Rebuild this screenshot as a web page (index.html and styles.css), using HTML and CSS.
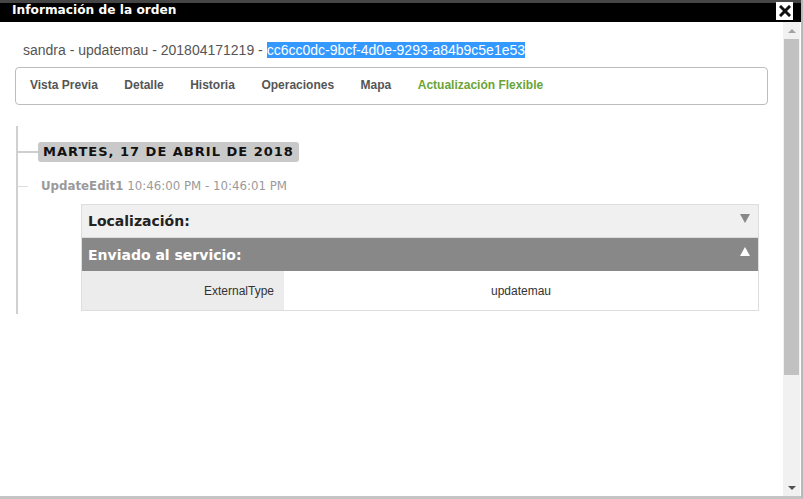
FILE: index.html
```html
<!DOCTYPE html>
<html lang="es">
<head>
<meta charset="utf-8">
<title>Información de la orden</title>
<link rel="stylesheet" href="styles.css">
</head>
<body>
<div class="dialog">
  <div class="titlebar">
    <span class="title">Información de la orden</span>
    <span class="close">
      <svg width="12" height="12" viewBox="0 0 12 12"><path d="M2 2 L10 10 M10 2 L2 10" stroke="#111" stroke-width="3" stroke-linecap="square"/></svg>
    </span>
  </div>
  <div class="main">
    <div class="content">
      <div class="ordername">sandra - updatemau - 201804171219 - <span class="sel">cc6cc0dc-9bcf-4d0e-9293-a84b9c5e1e53</span></div>
      <nav class="tabs">
        <span class="tab">Vista Previa</span>
        <span class="tab">Detalle</span>
        <span class="tab">Historia</span>
        <span class="tab">Operaciones</span>
        <span class="tab">Mapa</span>
        <span class="tab active">Actualización Flexible</span>
      </nav>
      <div class="timeline">
        <div class="daterow">
          <span class="hline"></span>
          <span class="date">MARTES, 17 DE ABRIL DE 2018</span>
        </div>
        <div class="eventrow">
          <span class="hline short"></span>
          <span class="event"><b>UpdateEdit1</b> 10:46:00 PM - 10:46:01 PM</span>
        </div>
        <div class="accordion">
          <div class="acc-head">
            <span>Localización:</span>
            <span class="arrow down"></span>
          </div>
          <div class="acc-head open">
            <span>Enviado al servicio:</span>
            <span class="arrow up"></span>
          </div>
          <div class="acc-row">
            <div class="key">ExternalType</div>
            <div class="val">updatemau</div>
          </div>
        </div>
      </div>
    </div>
    <div class="scrollbar">
      <span class="sb-btn"><span class="tri-up"></span></span>
      <span class="thumb"></span>
      <span class="track"></span>
      <span class="sb-btn"><span class="tri-down"></span></span>
    </div>
  </div>
</div>
</body>
</html>
```
FILE: styles.css
```css
html, body {
  margin: 0;
  padding: 0;
  background: #ffffff;
}
body {
  width: 803px;
  height: 499px;
  overflow: hidden;
}
.dialog {
  width: 803px;
  height: 499px;
  box-sizing: border-box;
  display: flex;
  flex-direction: column;
  border-right: 2px solid #b8b8b8;
  border-bottom: 3px solid #c4c4c4;
  background: #fff;
}
.titlebar {
  height: 22px;
  box-sizing: border-box;
  background: #000;
  border-top: 3px solid #454545;
  display: flex;
  justify-content: space-between;
  align-items: flex-start;
  padding-left: 12px;
  padding-right: 8px;
}
.title {
  color: #fff;
  font-family: "DejaVu Sans", Verdana, sans-serif;
  font-weight: bold;
  font-size: 12.2px;
  line-height: 14px;
  margin-top: 0;
}
.close {
  width: 17px;
  height: 18px;
  margin-top: -1px;
  background: #fff;
  display: flex;
  align-items: center;
  justify-content: center;
}
.main {
  flex: 1;
  display: flex;
  min-height: 0;
}
.content {
  flex: 1;
  padding: 19px 15px 0 15px;
  min-width: 0;
}
.ordername {
  font-family: "Liberation Sans", Arial, sans-serif;
  font-size: 14px;
  line-height: 16px;
  color: #555;
  padding-left: 8px;
  padding-top: 1px;
}
.sel {
  background: #3399ff;
  color: #fff;
}
.tabs {
  margin-top: 9px;
  height: 38px;
  box-sizing: border-box;
  border: 1px solid #bdbdbd;
  border-radius: 4px;
  display: flex;
  align-items: center;
  gap: 26.5px;
  padding-left: 14px;
  padding-bottom: 3px;
  font-family: "Liberation Sans", Arial, sans-serif;
  font-weight: bold;
  font-size: 12px;
  color: #555;
}
.tab.active {
  color: #6aa437;
}
.timeline {
  margin-top: 21px;
  margin-left: 1px;
  border-left: 2px solid #d0d0d0;
  padding-top: 16px;
  padding-bottom: 3px;
}
.daterow {
  display: flex;
  align-items: center;
}
.hline {
  width: 20px;
  height: 2px;
  background: #cfcfcf;
}
.hline.short {
  width: 10px;
  height: 1px;
  background: #dcdcdc;
}
.date {
  background: #c9c9c9;
  border-radius: 3px;
  padding: 0 5px;
  height: 20px;
  line-height: 20px;
  font-family: "DejaVu Sans", Verdana, sans-serif;
  font-weight: bold;
  font-size: 13px;
  letter-spacing: 1px;
  color: #111;
}
.eventrow {
  display: flex;
  align-items: center;
  margin-top: 15px;
  height: 18px;
}
.event {
  margin-left: 13px;
  font-family: "DejaVu Sans", Verdana, sans-serif;
  font-size: 11.8px;
  color: #9a9a9a;
}
.event b {
  font-weight: bold;
}
.accordion {
  margin: 9px 9px 0 63px;
  border: 1px solid #dedede;
}
.acc-head {
  height: 33px;
  box-sizing: border-box;
  display: flex;
  align-items: center;
  justify-content: space-between;
  padding: 0 8px 0 6px;
  background: #f0f0f0;
  border-bottom: 1px solid #dcdcdc;
  font-family: "DejaVu Sans", Verdana, sans-serif;
  font-weight: bold;
  font-size: 14px;
  color: #222;
}
.acc-head.open {
  background: #888888;
  color: #fff;
  border-bottom: none;
  height: 33px;
}
.arrow {
  width: 0;
  height: 0;
  border-left: 5px solid transparent;
  border-right: 5px solid transparent;
}
.arrow.down {
  border-top: 9px solid #888;
  margin-top: -6px;
}
.arrow.up {
  border-bottom: 9px solid #fff;
  margin-top: -6px;
}
.acc-row {
  display: flex;
  height: 39px;
  font-family: "Liberation Sans", Arial, sans-serif;
  font-size: 12px;
  color: #333;
}
.key {
  width: 202px;
  background: #ececec;
  display: flex;
  align-items: center;
  justify-content: flex-end;
  padding-right: 10px;
  box-sizing: border-box;
}
.val {
  flex: 1;
  display: flex;
  align-items: center;
  justify-content: center;
}
.scrollbar {
  width: 17px;
  margin-right: 1px;
  background: #f1f1f1;
  display: flex;
  flex-direction: column;
}
.sb-btn {
  height: 17px;
  display: flex;
  align-items: center;
  justify-content: center;
}
.tri-up {
  width: 0;
  height: 0;
  border-left: 4px solid transparent;
  border-right: 4px solid transparent;
  border-bottom: 4px solid #a3a3a3;
}
.tri-down {
  width: 0;
  height: 0;
  border-left: 4px solid transparent;
  border-right: 4px solid transparent;
  border-top: 4px solid #505050;
}
.thumb {
  height: 336px;
  margin: 0 1px;
  background: #c1c1c1;
}
.track {
  flex: 1;
}
```
